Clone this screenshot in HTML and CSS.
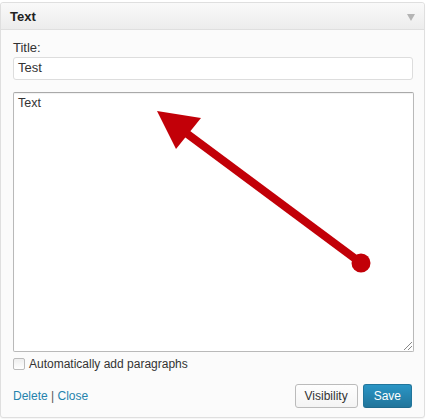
FILE: index.html
```html
<!DOCTYPE html>
<html>
<head>
<meta charset="utf-8">
<link rel="stylesheet" href="styles.css">
</head>
<body>
<div class="page">
  <div class="widget">
    <div class="widget-top">
      <span class="widget-title">Text</span>
      <span class="toggle"></span>
    </div>
    <div class="widget-inside">
      <label class="field-label">Title:</label>
      <div class="input">Test</div>
      <div class="textarea">Text<span class="resize"></span></div>
      <label class="check-row"><span class="checkbox"></span>Automatically add paragraphs</label>
      <div class="controls">
        <div class="links"><a class="link">Delete</a> <span class="sep">|</span> <a class="link">Close</a></div>
        <div class="buttons">
          <span class="btn">Visibility</span>
          <span class="btn btn-primary">Save</span>
        </div>
      </div>
    </div>
  </div>
  <svg class="arrow" width="430" height="420" viewBox="0 0 430 420">
    <line x1="361" y1="263" x2="178" y2="127" stroke="#c20008" stroke-width="8" />
    <polygon points="157,111 201,118 176,149" fill="#c20008" />
    <circle cx="361" cy="263" r="9.5" fill="#c20008" />
  </svg>
</div>
</body>
</html>
```
FILE: styles.css
```css
html, body {
  margin: 0;
  padding: 0;
  background: #ffffff;
}
.page {
  position: relative;
  width: 430px;
  height: 420px;
  overflow: hidden;
  padding-top: 2px;
  box-sizing: border-box;
  font-family: "Liberation Sans", Arial, sans-serif;
  font-size: 13px;
  color: #333;
}
.widget {
  width: 425px;
  box-sizing: border-box;
  border: 1px solid #dfdfdf;
  border-radius: 3px;
  background: #fbfbfb;
  box-shadow: 0 1px 1px rgba(0,0,0,0.04);
}
.widget-top {
  height: 26px;
  display: flex;
  align-items: center;
  justify-content: space-between;
  padding: 0 9px 0 9px;
  background: linear-gradient(#f9f9f9, #ececec);
  border-bottom: 1px solid #dfdfdf;
  border-radius: 3px 3px 0 0;
}
.widget-title {
  font-weight: bold;
  color: #222;
}
.toggle {
  width: 0;
  height: 0;
  border-left: 4px solid transparent;
  border-right: 4px solid transparent;
  border-top: 7px solid #b4b4b4;
  margin-top: 2px;
}
.widget-inside {
  padding: 11px 12px 0 12px;
}
.field-label {
  display: block;
  line-height: 14px;
  color: #333;
}
.input {
  margin-top: 2px;
  box-sizing: border-box;
  height: 23px;
  width: 400px;
  border: 1px solid #dddddd;
  border-radius: 3px;
  background: #fff;
  padding: 2px 4px;
  line-height: 16px;
  color: #333;
}
.textarea {
  position: relative;
  margin-top: 12px;
  width: 401px;
  height: 260px;
  box-sizing: border-box;
  border: 1px solid #b9b9b9;
  border-top-color: #a9a9a9;
  border-radius: 2px;
  background: #fff;
  padding: 3px 4px;
  line-height: 14px;
  font-size: 12.5px;
  color: #333;
  box-shadow: inset 0 1px 1px rgba(0,0,0,0.06);
}
.resize {
  position: absolute;
  right: 1px;
  bottom: 1px;
  width: 8px;
  height: 8px;
  background: linear-gradient(135deg, transparent 45%, #888 45%, #888 55%, transparent 55%, transparent 70%, #888 70%, #888 80%, transparent 80%);
}
.check-row {
  display: flex;
  align-items: center;
  margin-top: 6px;
  height: 12px;
  color: #333;
  font-size: 12px;
}
.checkbox {
  width: 10px;
  height: 10px;
  border: 1px solid #bbb;
  border-radius: 2px;
  background: linear-gradient(#eee, #fff);
  margin-right: 4px;
}
.controls {
  display: flex;
  justify-content: space-between;
  align-items: center;
  margin-top: 14px;
  height: 24px;
  padding-bottom: 9px;
  font-size: 12px;
}
.links {
  color: #333;
}
.link {
  color: #2583ad;
}
.sep {
  color: #555;
}
.buttons {
  display: flex;
  gap: 5px;
}
.btn {
  display: inline-block;
  height: 24px;
  box-sizing: border-box;
  line-height: 22px;
  padding: 0 9px;
  border: 1px solid #bbb;
  border-radius: 3px;
  background: linear-gradient(#fefefe, #f4f4f4);
  color: #333;
  font-size: 12px;
}
.btn-primary {
  background: linear-gradient(#2a95c5, #21759b);
  border-color: #21759b;
  border-bottom-color: #1e6a8d;
  color: #fff;
  padding: 0 10px;
}
.arrow {
  position: absolute;
  left: 0;
  top: 0;
}
```
